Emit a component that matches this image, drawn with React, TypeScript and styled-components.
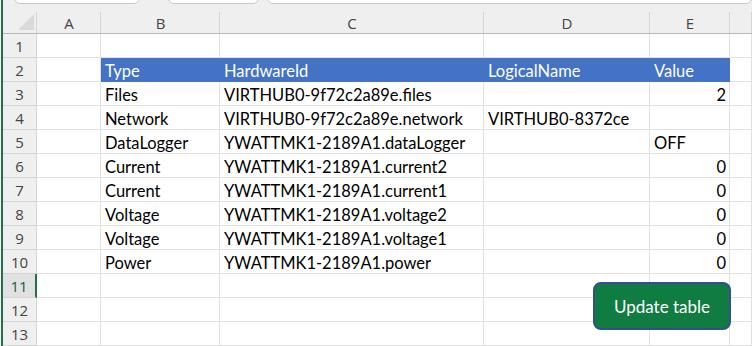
import React from "react";
import styled, { createGlobalStyle, css } from "styled-components";

const GlobalStyle = createGlobalStyle`
  body {
    margin: 0;
    background: #ffffff;
  }
`;

const Frame = styled.div`
  position: relative;
  width: 749px;
  height: 346px;
  margin-left: 1px;
  border-left: 2px solid #217346;
  overflow: hidden;
  background: #ffffff;
  font-family: Lato, "Open Sans", sans-serif;
`;

const TabStrip = styled.div`
  display: flex;
  height: 4px;
  background: #efefef;
  padding-left: 11px;
`;

const Tab = styled.div<{ $w?: number; $gap?: number }>`
  width: ${(p) => (p.$w ? `${p.$w}px` : "auto")};
  flex: ${(p) => (p.$w ? "none" : "1")};
  margin-left: ${(p) => p.$gap ?? 0}px;
  margin-top: -6px;
  height: 8px;
  background: #ffffff;
  border: 1px solid #c8c8c8;
  border-radius: 0 0 6px 6px;
`;

const Grid = styled.div`
  display: grid;
  grid-template-columns: 34px 64px 119px 264px 166px 80px 1fr;
  grid-template-rows: 30px;
  grid-auto-rows: 24px;
`;

const ColHead = styled.div`
  position: relative;
  display: flex;
  align-items: flex-end;
  justify-content: center;
  padding-bottom: 0;
  background: #efefef;
  border-bottom: 1px solid #b8b8b8;
  color: #444444;
  font-family: "Open Sans", sans-serif;
  font-size: 15px;
  line-height: 20px;
  &::after {
    content: "";
    position: absolute;
    right: 0;
    top: 8px;
    bottom: 0;
    width: 1px;
    background: #d4d4d4;
  }
`;

const Corner = styled(ColHead)`
  &::before {
    content: "";
    position: absolute;
    right: 3px;
    bottom: 3px;
    width: 0;
    height: 0;
    border-left: 16px solid transparent;
    border-bottom: 16px solid #dadada;
  }
`;

const RowHead = styled.div<{ $selected?: boolean }>`
  display: flex;
  align-items: flex-end;
  justify-content: center;
  padding-bottom: 0;
  background: #efefef;
  border-right: 1px solid #d4d4d4;
  border-bottom: 1px solid #d4d4d4;
  color: #444444;
  font-family: "Open Sans", sans-serif;
  font-size: 15px;
  line-height: 21px;
  ${(p) =>
    p.$selected &&
    css`
      background: #e1e1e1;
      color: #0e6537;
      border-right: 2px solid #217346;
    `}
`;

const Cell = styled.div<{ $head?: boolean; $num?: boolean }>`
  display: flex;
  align-items: flex-end;
  justify-content: ${(p) => (p.$num ? "flex-end" : "flex-start")};
  padding: 0 3px 0 4px;
  border-right: 1px solid #e1e1e1;
  border-bottom: 1px solid #e1e1e1;
  color: #000000;
  font-size: 16.5px;
  line-height: 19px;
  white-space: nowrap;
  ${(p) =>
    p.$head &&
    css`
      background: #4472c4;
      color: #ffffff;
      border-right-color: #4472c4;
      border-bottom-color: #4472c4;
    `}
`;

const UpdateButton = styled.button`
  position: absolute;
  left: 590px;
  top: 282px;
  width: 138px;
  height: 48px;
  box-sizing: border-box;
  border: 2px solid #2f528f;
  border-radius: 8px;
  background: #107c41;
  color: #ffffff;
  font-family: Lato, "Open Sans", sans-serif;
  font-size: 17px;
  padding: 0;
  cursor: pointer;
`;

const columns = ["A", "B", "C", "D", "E", ""];

const header = ["Type", "HardwareId", "LogicalName", "Value"];

const rows: [string, string, string, string][] = [
  ["Files", "VIRTHUB0-9f72c2a89e.files", "", "2"],
  ["Network", "VIRTHUB0-9f72c2a89e.network", "VIRTHUB0-8372ce", ""],
  ["DataLogger", "YWATTMK1-2189A1.dataLogger", "", "OFF"],
  ["Current", "YWATTMK1-2189A1.current2", "", "0"],
  ["Current", "YWATTMK1-2189A1.current1", "", "0"],
  ["Voltage", "YWATTMK1-2189A1.voltage2", "", "0"],
  ["Voltage", "YWATTMK1-2189A1.voltage1", "", "0"],
  ["Power", "YWATTMK1-2189A1.power", "", "0"],
];

const isNumber = (v: string) => v !== "" && !isNaN(Number(v));

export default function App() {
  return (
    <>
      <GlobalStyle />
      <Frame>
        <TabStrip>
          <Tab $w={124} />
          <Tab $w={89} $gap={28} />
          <Tab $gap={8} />
        </TabStrip>
        <Grid>
          <Corner />
          {columns.map((c, i) => (
            <ColHead key={i}>{c}</ColHead>
          ))}

          <RowHead>1</RowHead>
          {columns.map((_, i) => (
            <Cell key={i} />
          ))}

          <RowHead>2</RowHead>
          <Cell />
          {header.map((h) => (
            <Cell key={h} $head>
              {h}
            </Cell>
          ))}
          <Cell />

          {rows.map((r, ri) => (
            <React.Fragment key={ri}>
              <RowHead>{ri + 3}</RowHead>
              <Cell />
              <Cell>{r[0]}</Cell>
              <Cell>{r[1]}</Cell>
              <Cell>{r[2]}</Cell>
              <Cell $num={isNumber(r[3])}>{r[3]}</Cell>
              <Cell />
            </React.Fragment>
          ))}

          {[11, 12, 13].map((n) => (
            <React.Fragment key={n}>
              <RowHead $selected={n === 11}>{n}</RowHead>
              {columns.map((_, i) => (
                <Cell key={i} />
              ))}
            </React.Fragment>
          ))}
        </Grid>
        <UpdateButton>Update table</UpdateButton>
      </Frame>
    </>
  );
}
